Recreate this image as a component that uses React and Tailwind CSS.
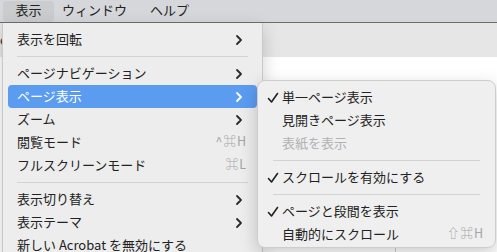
import React from 'react';

const font = { fontFamily: '"Noto Sans CJK JP", "DejaVu Sans", sans-serif' };

const Chevron = ({ white }) => (
  <svg width="8" height="12" viewBox="0 0 8 12" className="shrink-0">
    <path
      d="M2 2 L6 6 L2 10"
      fill="none"
      stroke={white ? '#ffffff' : '#2a2a2a'}
      strokeWidth="1.8"
      strokeLinecap="round"
      strokeLinejoin="round"
    />
  </svg>
);

const Check = () => (
  <svg width="12" height="12" viewBox="0 0 12 12" className="shrink-0">
    <path
      d="M1.5 6.5 L4.5 10 L10.5 1.5"
      fill="none"
      stroke="#222"
      strokeWidth="1.6"
      strokeLinecap="round"
      strokeLinejoin="round"
    />
  </svg>
);

const Sep = ({ className = '' }) => (
  <div className={`h-[11px] flex items-center ${className}`}>
    <div className="h-px w-full bg-[#d3d3d3]" />
  </div>
);

const MainItem = ({ label, sub, shortcut, active }) => (
  <div
    className={`h-[23px] flex items-center justify-between pl-[9px] pr-[14px] mx-[5px] rounded-[4px] ${
      active ? 'bg-[#5b9cf1] text-white' : 'text-[#222]'
    }`}
  >
    <span className="mb-[2px]">{label}</span>
    {sub && <Chevron white={active} />}
    {shortcut && (
      <span className="mb-[2px] text-[#a5a5a5] text-[12.5px] tracking-[1px] -mr-[4px]">{shortcut}</span>
    )}
  </div>
);

const SubItem = ({ label, checked, disabled, shortcut }) => (
  <div className="h-[23px] flex items-center pl-[4px] pr-[6px] mx-[5px]">
    <div className="w-[15px] flex items-center">{checked && <Check />}</div>
    <span className={`mb-[2px] ${disabled ? 'text-[#b2b2b2]' : 'text-[#222]'}`}>{label}</span>
    {shortcut && (
      <span className="mb-[2px] ml-auto text-[#a5a5a5] text-[12.5px] tracking-[1px]">{shortcut}</span>
    )}
  </div>
);

export default function App() {
  return (
    <div className="relative w-[497px] h-[252px] overflow-hidden bg-white text-[13px]" style={font}>
      {/* menu bar */}
      <div className="h-[23px] flex items-center bg-[#d6d7da] border-b border-[#6e6e6e] text-[#222]">
        <div className="ml-[3px] h-[21px] w-[51px] flex items-center justify-center rounded-[4px] bg-[#cbccce]">
          <span className="mb-[2px]">表示</span>
        </div>
        <div className="ml-[8px] mb-[2px]">ウィンドウ</div>
        <div className="ml-[23px] mb-[2px]">ヘルプ</div>
      </div>
      {/* document toolbar behind */}
      <div className="h-[34px] bg-[#e6e6e6]" />
      <div className="absolute left-0 top-[31px] text-[12px] text-[#333]">e</div>
      <div className="absolute left-[395px] top-[245px] h-[10px] w-px bg-[#cfcfcf]" />

      {/* main menu */}
      <div className="absolute left-[2px] top-[23px] w-[261px] h-[240px] bg-[#ededed] border-x border-[#c9c9c9] rounded-b-[8px] shadow-[0_6px_18px_rgba(0,0,0,0.18)] pt-[5px]">
        <MainItem label="表示を回転" sub />
        <Sep className="mx-[14px]" />
        <MainItem label="ページナビゲーション" sub />
        <MainItem label="ページ表示" sub active />
        <MainItem label="ズーム" sub />
        <MainItem label="閲覧モード" shortcut="^⌘H" />
        <MainItem label="フルスクリーンモード" shortcut="⌘L" />
        <Sep className="mx-[14px]" />
        <MainItem label="表示切り替え" sub />
        <MainItem label="表示テーマ" sub />
        <MainItem label="新しい Acrobat を無効にする" />
      </div>

      {/* submenu */}
      <div className="absolute left-[257px] top-[80px] w-[239px] h-[168px] bg-[#efefef] border border-[#cdcdcd] rounded-[8px] shadow-[0_6px_18px_rgba(0,0,0,0.2)] pt-[5px]">
        <SubItem label="単一ページ表示" checked />
        <SubItem label="見開きページ表示" />
        <SubItem label="表紙を表示" disabled />
        <Sep className="mx-[15px]" />
        <SubItem label="スクロールを有効にする" checked />
        <Sep className="mx-[15px]" />
        <SubItem label="ページと段間を表示" checked />
        <SubItem label="自動的にスクロール" shortcut="⇧⌘H" />
      </div>
    </div>
  );
}
